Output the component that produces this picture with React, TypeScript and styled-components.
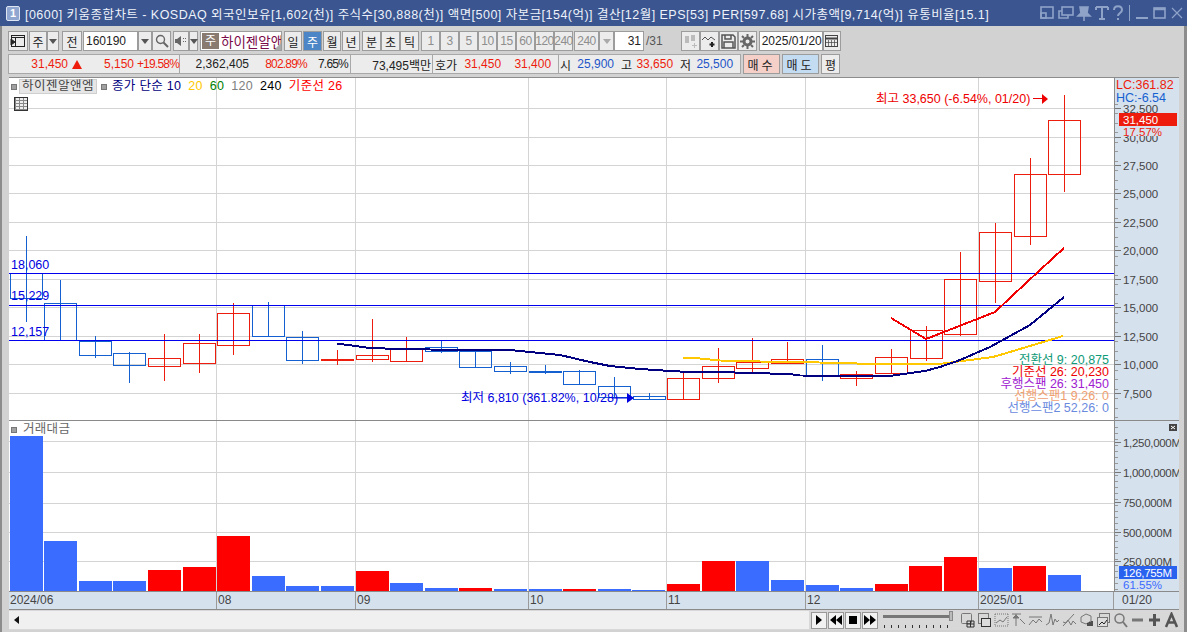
import React from 'react'
import styled, { createGlobalStyle } from 'styled-components'

const FONT = `"Liberation Sans", "Noto Sans CJK KR", sans-serif`
const RED = '#ee1c0c'
const CANDLE_BLUE = '#1560d0'
const AXIS_BG = '#d6e1ee'

const GlobalStyle = createGlobalStyle`
  html, body { margin: 0; padding: 0; background: #d2d2d2; overflow: hidden; }
  * { box-sizing: border-box; }
`

const Win = styled.div`
  width: 1187px;
  height: 632px;
  display: flex;
  flex-direction: column;
  background: #d2d2d2;
  font-family: ${FONT};
  font-size: 12px;
  color: #222;
  border-left: 2px solid #8c8c8c;
  border-right: 3px solid #8c8c8c;
`

const TitleBar = styled.div`
  height: 26px;
  margin: 0 -3px 0 -2px;
  flex: none;
  display: flex;
  align-items: center;
  background: #3a5590;
  color: #eef2fa;
  padding: 0 3px 0 6px;
  font-size: 12.5px;
  white-space: nowrap;
`

const TitleBadge = styled.span`
  width: 14px;
  height: 15px;
  margin-right: 5px;
  flex: none;
  border: 1px solid #dfe6f3;
  border-radius: 2px;
  background: #8fa6d0;
  color: #fff;
  font-weight: bold;
  font-size: 11px;
  line-height: 13px;
  text-align: center;
`

const TitleText = styled.span`
  letter-spacing: 0.47px;
  flex: 1;
`

const TitleIcons = styled.div`
  display: flex;
  align-items: center;
`

const Toolbar = styled.div`
  height: 20px;
  margin: 5px 0 0 6px;
  flex: none;
  display: flex;
  align-items: stretch;
`

const QuoteRow = styled(Toolbar)`
  margin-top: 3px;
`

const Btn = styled.div<{ $w: number; $ml?: number; $on?: boolean; $off?: boolean }>`
  width: ${p => p.$w}px;
  margin-left: ${p => p.$ml ?? 0}px;
  flex: none;
  display: flex;
  align-items: center;
  justify-content: center;
  border: 1px solid #9c9c9c;
  background: ${p => (p.$on ? '#4d86c6' : '#ececec')};
  color: ${p => (p.$on ? '#fff' : p.$off ? '#8e8e8e' : '#222')};
  font-size: 12px;
  white-space: nowrap;
  letter-spacing: ${p => (p.$off ? '-0.5px' : '0')};
`

const Field = styled(Btn)`
  background: #fff;
  justify-content: flex-start;
  padding-left: 2px;
`

const RightField = styled(Field)`
  justify-content: flex-end;
  padding: 0 2px 0 0;
`

const StockTag = styled(Btn)`
  background: #fff;
  justify-content: flex-start;
  gap: 2px;
  padding-left: 1px;
  color: #7a0a4a;
  font-size: 13.5px;
  overflow: hidden;
  position: relative;
  &::after {
    content: '';
    position: absolute;
    right: 0;
    bottom: 0;
    border-left: 7px solid transparent;
    border-bottom: 7px solid #aaa;
  }
`

const TagBox = styled.span`
  width: 17px;
  height: 16px;
  background: #8a7b70;
  color: #fff;
  text-align: center;
  line-height: 16px;
  font-size: 12px;
  flex: none;
`

const Arrow = styled.span<{ $off?: boolean }>`
  width: 0;
  height: 0;
  border-left: 4px solid transparent;
  border-right: 4px solid transparent;
  border-top: 5px solid ${p => (p.$off ? '#aaa' : '#555')};
`

const PlainText = styled.span<{ $ml?: number }>`
  margin-left: ${p => p.$ml ?? 0}px;
  align-self: center;
  color: #555;
  font-size: 12px;
`

const QuoteCell = styled.div<{ $w: number }>`
  width: ${p => p.$w}px;
  flex: none;
  display: flex;
  align-items: center;
  border: 1px solid #a8a8a8;
  border-left-width: 0;
  background: #ececec;
  white-space: nowrap;
  font-size: 12px;
  &:first-child { border-left-width: 1px; }
`

const Q = styled.span<{ $w?: number; $c?: string; $ml?: number; $tight?: boolean }>`
  ${p => (p.$w ? `width: ${p.$w}px; flex: none; text-align: right;` : '')}
  margin-left: ${p => p.$ml ?? 0}px;
  color: ${p => p.$c ?? '#222'};
  letter-spacing: ${p => (p.$tight ? '-0.8px' : '0')};
`

const UpMark = styled.span`
  margin-left: 4px;
  width: 0;
  height: 0;
  flex: none;
  border-left: 5px solid transparent;
  border-right: 5px solid transparent;
  border-bottom: 9px solid ${RED};
`

const TradeBtn = styled(Btn)<{ $bg: string }>`
  background: ${p => p.$bg};
  letter-spacing: 3px;
`

const Panes = styled.div`
  margin: 3px 0 0 7px;
  width: 1170px;
  flex: none;
  border-top: 1px solid #8c8c8c;
  display: flex;
  flex-direction: column;
`

const PaneRow = styled.div<{ $h: number }>`
  height: ${p => p.$h}px;
  flex: none;
  display: flex;
  border-bottom: 1px solid #8a8a8a;
`

const Plot = styled.div`
  width: 1105px;
  flex: none;
  background: #fff;
  position: relative;
  svg { display: block; }
`

const AxisCol = styled.div`
  flex: 1;
  background: ${AXIS_BG};
  border-left: 1px solid #8a8a8a;
  overflow: hidden;
  svg { display: block; }
`

const Legend = styled.div<{ $top: number }>`
  position: absolute;
  left: 2px;
  top: ${p => p.$top}px;
  display: flex;
  align-items: center;
  gap: 7px;
  font-size: 12.5px;
  line-height: 13px;
  white-space: nowrap;
`

const Marker = styled.i`
  width: 6px;
  height: 6px;
  background: #a0a0a0;
  border: 1px solid #777;
  flex: none;
`

const LegendTag = styled.span`
  background: #e6e6e6;
  border: 1px solid #cfcfcf;
  padding: 0 2px;
  color: #444;
  margin: 0 -3px 0 -5px;
  letter-spacing: 0.5px;
`

const L = styled.span<{ $c: string; $ml?: number }>`
  color: ${p => p.$c};
  margin-left: ${p => p.$ml ?? 0}px;
  letter-spacing: 0.3px;
`

const GridBtn = styled.div`
  position: absolute;
  left: 5px;
  top: 19px;
  width: 14px;
  height: 14px;
  border: 1px solid #333;
  background-color: #eee;
  background-image:
    repeating-linear-gradient(0deg, #888 0 1px, transparent 1px 3px),
    repeating-linear-gradient(90deg, #888 0 1px, transparent 1px 4px);
`

const TimeRow = styled.div`
  height: 18px;
  flex: none;
  display: flex;
  background: ${AXIS_BG};
  border-bottom: 1px solid #8a8a8a;
  font-size: 12px;
  color: #444;
`

const TimeCell = styled.div<{ $w: number; $pad?: number }>`
  width: ${p => p.$w}px;
  flex: none;
  padding-left: ${p => p.$pad ?? 1}px;
  line-height: 16px;
  border-left: 1px solid #9a9a9a;
  &:first-child { border-left: 0; }
`

const ScrollRow = styled.div`
  height: 20px;
  margin-left: 7px;
  flex: none;
  display: flex;
  align-items: center;
  background: #d8d8d8;
`

const ScrollArrow = styled.div`
  width: 14px;
  height: 18px;
  flex: none;
  background: #f0f0f0;
  display: flex;
  align-items: center;
  justify-content: center;
  &::before {
    content: '';
    border-top: 4px solid transparent;
    border-bottom: 4px solid transparent;
    border-right: 5px solid #111;
  }
`

const ScrollTrack = styled.div`
  width: 786px;
  height: 18px;
  background: #f0f0f0;
  flex: none;
`

const PlayBtn = styled.div<{ $ml?: number }>`
  width: 16px;
  height: 17px;
  margin-left: ${p => p.$ml ?? 0}px;
  flex: none;
  background: #f2f2f2;
  border: 1px solid #999;
  display: flex;
  align-items: center;
  justify-content: center;
`

const Slider = styled.div`
  width: 70px;
  height: 18px;
  margin: 0 7px 0 5px;
  flex: none;
  position: relative;
  &::before {
    content: '';
    position: absolute;
    left: 0;
    right: 2px;
    top: 4px;
    height: 3px;
    background: #777;
  }
  &::after {
    content: '';
    position: absolute;
    left: 1px;
    right: 3px;
    bottom: 1px;
    height: 3px;
    background: repeating-linear-gradient(90deg, #333 0 1px, transparent 1px 7px);
  }
`

const Thumb = styled.span`
  position: absolute;
  right: 0;
  top: 0;
  width: 4px;
  height: 10px;
  background: #bbb;
  border: 1px solid #888;
  z-index: 1;
`

const ToolIcons = styled.div`
  display: flex;
  align-items: center;
  gap: 2px;
`

// candles in screen coordinates: x, wick top, wick bottom, body top, body bottom, up
const candles: [number, number, number, number, number, boolean][] = [
  [26.5, 236, 322, 273, 298, false],
  [60.5, 280, 341, 303, 340, false],
  [95.5, 336, 358, 341, 355, false],
  [129.5, 352, 383, 353, 365, false],
  [164.5, 334, 381, 358, 366, true],
  [199.5, 334, 373, 343, 363, true],
  [233.5, 303, 355, 313, 345, true],
  [268.5, 302, 336, 305, 336, false],
  [302.5, 331, 364, 337, 360, false],
  [337.5, 350, 365, 359, 360, true],
  [372.5, 319, 362, 355, 359, true],
  [406.5, 337, 362, 348, 361, true],
  [441.5, 340, 353, 347, 351, false],
  [475.5, 351, 368, 351, 367, false],
  [510.5, 362, 374, 366, 371, false],
  [545.5, 365, 374, 371, 372, false],
  [579.5, 370, 385, 371, 384, false],
  [614.5, 377, 397, 386, 397, false],
  [649.5, 393, 400, 396, 399, false],
  [683.5, 371, 400, 378, 399, true],
  [718.5, 348, 383, 366, 378, true],
  [752.5, 338, 372, 362, 368, true],
  [787.5, 342, 364, 359, 363, true],
  [822.5, 345, 381, 359, 375, false],
  [856.5, 371, 386, 374, 378, true],
  [891.5, 349, 374, 357, 373, true],
  [926.5, 326, 361, 330, 358, true],
  [960.5, 252, 336, 279, 334, true],
  [995.5, 223, 303, 232, 281, true],
  [1030.5, 158, 245, 174, 236, true],
  [1064.5, 95, 192, 120, 174, true],
]

const volumes: [number, number, boolean][] = [
  [10, 436, false], [44, 541, false], [79, 581, false], [113, 581, false], [148, 570, true],
  [183, 567, true], [217, 536, true], [252, 576, false], [286, 586, false], [321, 586, false],
  [356, 571, true], [390, 583, false], [425, 588, false], [459, 588, true], [494, 589, false],
  [529, 589, false], [563, 589, true], [598, 589, false], [632, 590, false], [667, 584, true],
  [702, 561, true], [736, 561, false], [771, 580, false], [806, 585, false], [840, 588, false],
  [875, 584, true], [909, 566, true], [944, 557, true], [979, 568, false], [1013, 566, true],
  [1048, 575, false],
]

const priceGrid = [108.5, 137.5, 165.5, 193.5, 222.5, 250.5, 279.5, 307.5, 336.5, 364.5, 393.5]
const volGrid = [441.5, 472.5, 503.5, 532.5, 561.5]
const vGrid = [216.5, 355.5, 528.5, 666.5, 805.5, 978.5]

const navy = '337,343.5 370,348 400,349 430,349.5 477,350 510,350 530,352 560,355 590,362 610,366 640,369 670,371 690,372 720,372 750,373 790,374 800,375.5 890,376 910,373 925,371 940,367 960,360 990,347 1030,325 1064,297'
const redLine = '891,318 926,339 995,312 1012,296 1040,270 1064,248'
const yellow = '683,357.5 700,358.5 720,360.5 760,361.5 800,362 857,363.5 890,364.5 943,363.5 993,357 1030,346 1063,336'

const maLabels: [string, string, number][] = [
  ['전환선 9: 20,875', '#0f9a78', 364],
  ['기준선 26: 20,230', '#ee0000', 376],
  ['후행스팬 26: 31,450', '#a020d0', 388],
  ['선행스팬1 9,26: 0', '#f0a070', 400],
  ['선행스팬2 52,26: 0', '#6a8ae0', 412],
]

const priceTicks: [string, number][] = [
  ['32,500', 108], ['30,000', 137], ['27,500', 165], ['25,000', 193], ['22,500', 222], ['20,000', 250],
  ['17,500', 279], ['15,000', 307], ['12,500', 336], ['10,000', 364], ['7,500', 393],
]

const volTicks: [string, number][] = [
  ['1,250,000M', 442], ['1,000,000M', 472], ['750,000M', 502], ['500,000M', 532], ['250,000M', 561],
]

const TI = ({ children, w = 18 }: { children: React.ReactNode; w?: number }) => (
  <svg width={w} height="18" viewBox={`0 0 ${w} 18`} fill="none" stroke="#8fa3c8" strokeWidth="1.6">
    {children}
  </svg>
)

const ToolIcon = ({ children }: { children: React.ReactNode }) => (
  <svg width="15" height="16" viewBox="0 0 15 16" fill="none" stroke="#777" strokeWidth="1">
    {children}
  </svg>
)

const PriceChart = () => (
  <svg width="1105" height="342" viewBox="9 78 1105 342" fontFamily={FONT} fontSize="12.5">
    {priceGrid.map(y => <line key={y} x1="9" x2="1114" y1={y} y2={y} stroke="#d4d4d4" />)}
    {vGrid.map(x => <line key={x} x1={x} x2={x} y1="78" y2="420" stroke="#d4d4d4" />)}
    {candles.map(([x, wt, wb, bt, bb, up]) => {
      const c = up ? RED : CANDLE_BLUE
      return (
        <g key={x} stroke={c} fill="none">
          <line x1={x} x2={x} y1={wt} y2={wb} />
          <rect x={x - 16} y={bt + 0.5} width="32" height={bb - bt} />
        </g>
      )
    })}
    {[273.5, 305.5, 340.5].map(y => (
      <line key={y} x1="9" x2="1114" y1={y} y2={y} stroke="#0000ee" />
    ))}
    <polyline points={yellow} fill="none" stroke="#ffc800" strokeWidth="2" shapeRendering="crispEdges" />
    <polyline points={navy} fill="none" stroke="#000080" strokeWidth="2" shapeRendering="crispEdges" />
    <polyline points={redLine} fill="none" stroke="#f00000" strokeWidth="2" shapeRendering="crispEdges" />
    <g fill="#0000e0">
      <text x="11" y="269">18,060</text>
      <text x="11" y="300">15,229</text>
      <text x="11" y="336">12,157</text>
      <text x="461" y="402">최저 6,810 (361.82%, 10/28)</text>
      <path d="M612 398h16" stroke="#0000e0" />
      <path d="M627 393l7 5-7 5z" />
    </g>
    <g fill="#ee0000">
      <text x="876" y="103">최고 33,650 (-6.54%, 01/20)</text>
      <path d="M1033 98.5h11" stroke="#ee0000" />
      <path d="M1042 94l6 5-6 5z" />
    </g>
    {maLabels.map(([t, c, y]) => (
      <text key={t} x="1109" y={y} fill={c} textAnchor="end">{t}</text>
    ))}
  </svg>
)

const PriceAxis = () => (
  <svg width="64" height="342" viewBox="1114 78 64 342" fontFamily={FONT} fontSize="11.5" fill="#444">
    {Array.from({ length: 34 }, (_, i) => 103.5 + i * 9.5).map(y => (
      <line key={y} x1="1114" x2="1117" y1={Math.round(y) + 0.5} y2={Math.round(y) + 0.5} stroke="#999" />
    ))}
    {priceTicks.map(([t, y]) => (
      <g key={t}>
        <line x1="1114" x2="1120" y1={y + 0.5} y2={y + 0.5} stroke="#777" />
        <text x="1122" y={y + 5}>{t}</text>
      </g>
    ))}
    <rect x="1115" y="78" width="62" height="26" fill={AXIS_BG} />
    <rect x="1120" y="126" width="56" height="10" fill={AXIS_BG} />
    <text x="1115" y="89" fill="#ee1c0c" fontSize="12.5">LC:361.82</text>
    <text x="1115" y="102" fill="#1560d0" fontSize="12.5">HC:-6.54</text>
    <rect x="1118" y="113" width="58" height="13" fill="#ee1c0c" />
    <text x="1122" y="124" fill="#fff">31,450</text>
    <text x="1122" y="136" fill="#ee1c0c">17.57%</text>
  </svg>
)

const VolumeChart = () => (
  <svg width="1105" height="170" viewBox="9 421 1105 170">
    {volGrid.map(y => <line key={y} x1="9" x2="1114" y1={y} y2={y} stroke="#d4d4d4" />)}
    {vGrid.map(x => <line key={x} x1={x} x2={x} y1="421" y2="591" stroke="#d4d4d4" />)}
    {volumes.map(([x, top, up]) => (
      <rect key={x} x={x} y={top} width="33" height={591 - top} fill={up ? '#ff0000' : '#3a6cff'} />
    ))}
  </svg>
)

const VolumeAxis = () => (
  <svg width="64" height="170" viewBox="1114 421 64 170" fontFamily={FONT} fontSize="11.5" fill="#444">
    <rect x="1168" y="424" width="8" height="7" fill="#444" />
    <path d="M1170 426l4 3M1174 426l-4 3" stroke="#fff" />
    {Array.from({ length: 28 }, (_, i) => 427 + i * 6).map(y => (
      <line key={y} x1="1114" x2="1117" y1={y + 0.5} y2={y + 0.5} stroke="#999" />
    ))}
    {volTicks.map(([t, y]) => (
      <g key={t}>
        <line x1="1114" x2="1120" y1={y + 0.5} y2={y + 0.5} stroke="#777" />
        <text x="1122" y={y + 5} letterSpacing="-0.3">{t}</text>
      </g>
    ))}
    <rect x="1118" y="566" width="58" height="13" fill="#2a62f0" />
    <text x="1122" y="577" fill="#fff" letterSpacing="-0.3">126,755M</text>
    <text x="1122" y="589" fill="#3a6cff">61.55%</text>
  </svg>
)

export default function App() {
  return (
    <Win>
      <GlobalStyle />
      <TitleBar>
        <TitleBadge>1</TitleBadge>
        <TitleText>
          [0600] 키움종합차트 - KOSDAQ 외국인보유[1,602(천)] 주식수[30,888(천)] 액면[500] 자본금[154(억)] 결산[12월] EPS[53] PER[597.68] 시가총액[9,714(억)] 유통비율[15.1]
        </TitleText>
        <TitleIcons>
          <TI><rect x="2" y="3" width="12" height="11" /><rect x="2" y="9" width="5" height="5" /></TI>
          <TI><rect x="5" y="3" width="11" height="8" /><path d="M5 7H2v7h9v-3" /></TI>
          <TI><path d="M5 3h8l-1 6 3 3H3l3-3zM9 12v5" fill="#8fa3c8" /></TI>
          <TI><path d="M3 3h12M9 3v12M6 15h6M3 3v3M15 3v3" strokeWidth="2" /></TI>
          <TI w={14}><path d="M3 6c0-5 8-5 8 0 0 3-4 3-4 6M7 14v2" strokeWidth="2" /></TI>
          <TI w={9}><path d="M4.5 1v16" strokeWidth="1" /></TI>
          <TI><path d="M2 14h12" strokeWidth="2" /></TI>
          <TI><rect x="2" y="4" width="11" height="10" /><path d="M2 5h11" strokeWidth="2.5" /></TI>
          <TI w={14}><path d="M2 4l10 10M12 4L2 14" strokeWidth="1.2" /></TI>
        </TitleIcons>
      </TitleBar>

      <Toolbar>
        <Btn $w={20}>
          <svg width="16" height="14" viewBox="0 0 16 14" fill="none" stroke="#222">
            <rect x="1.5" y="1.5" width="13" height="11" />
            <path d="M1.5 3.5h13M5.5 3.5v9" />
            <path d="M1 5l4 3-4 3z" fill="#222" />
          </svg>
        </Btn>
        <Btn $w={18} $ml={1}>주</Btn>
        <Btn $w={12}><Arrow /></Btn>
        <Btn $w={20} $ml={3}>전</Btn>
        <Field $w={55} $ml={1}>160190</Field>
        <Btn $w={14}><Arrow /></Btn>
        <Btn $w={19}>
          <svg width="14" height="14" viewBox="0 0 14 14" fill="none" stroke="#666" strokeWidth="1.4">
            <circle cx="5.5" cy="5.5" r="4" /><path d="M8.5 8.5L13 13" strokeWidth="2" />
          </svg>
        </Btn>
        <Btn $w={16} $ml={2}>
          <svg width="14" height="12" viewBox="0 0 14 12" fill="#666">
            <path d="M1 4h2l4-3v10L3 8H1z" /><path d="M9 3h1v1H9zM11 3h1v1h-1zM9 6h1v1H9zM11 6h1v1h-1z" />
          </svg>
        </Btn>
        <Btn $w={9}><Arrow /></Btn>
        <StockTag $w={82} $ml={2}><TagBox>주</TagBox>하이젠알앤</StockTag>
        <Btn $w={18} $ml={2}>일</Btn>
        <Btn $w={19} $ml={1} $on>주</Btn>
        <Btn $w={18} $ml={1}>월</Btn>
        <Btn $w={18} $ml={1}>년</Btn>
        <Btn $w={19} $ml={2}>분</Btn>
        <Btn $w={19}>초</Btn>
        <Btn $w={19}>틱</Btn>
        {['1', '3', '5', '10', '15', '60', '120', '240'].map((t, i) => (
          <Btn key={t} $w={19} $ml={i === 0 ? 2 : 0} $off>{t}</Btn>
        ))}
        <Btn $w={25} $ml={1} $off>240</Btn>
        <Btn $w={15}><Arrow $off /></Btn>
        <RightField $w={30}>31</RightField>
        <PlainText $ml={2}>/31</PlainText>
        <Btn $w={19} $ml={18}>
          <svg width="15" height="14" viewBox="0 0 15 14" fill="#bbb">
            <path d="M2 2h4v7H2zM8 1h4v6H8zM11 9h1v2h2v1h-2v2h-1v-2H9v-1h2z" />
          </svg>
        </Btn>
        <Btn $w={19}>
          <svg width="16" height="14" viewBox="0 0 16 14" fill="none" stroke="#555">
            <path d="M1 6l3-3 3 3 3-3 4 3" /><path d="M11 8v5M8.5 10.5h5" strokeWidth="2" stroke="#222" />
          </svg>
        </Btn>
        <Btn $w={19}>
          <svg width="15" height="15" viewBox="0 0 15 15" fill="none" stroke="#555" strokeWidth="1.5">
            <path d="M1 1h11l2 2v11H1z" /><path d="M4 1v4h6V1M3 14V8h9v6" />
          </svg>
        </Btn>
        <Btn $w={19}>
          <svg width="15" height="15" viewBox="0 0 15 15" fill="none" stroke="#666">
            <circle cx="7.5" cy="7.5" r="3.5" strokeWidth="3" />
            <path d="M7.5 0v3M7.5 12v3M0 7.5h3M12 7.5h3M2 2l2 2M11 11l2 2M2 13l2-2M11 4l2-2" strokeWidth="2" />
          </svg>
        </Btn>
        <Field $w={64} $ml={2}>2025/01/20</Field>
        <Btn $w={18}>
          <svg width="13" height="12" viewBox="0 0 13 12" fill="none" stroke="#444">
            <rect x="0.5" y="0.5" width="12" height="11" /><path d="M0 3.5h13" strokeWidth="2" />
            <path d="M3.5 5v6M6.5 5v6M9.5 5v6M1 7.5h11" strokeWidth="0.7" />
          </svg>
        </Btn>
      </Toolbar>

      <QuoteRow>
        <QuoteCell $w={172}>
          <Q $w={59} $c={RED}>31,450</Q>
          <UpMark />
          <Q $w={52} $c={RED}>5,150</Q>
          <Q $w={45} $c={RED} $tight>+19.58%</Q>
        </QuoteCell>
        <QuoteCell $w={171}>
          <Q $w={69}>2,362,405</Q>
          <Q $w={58} $c={RED} $tight>802.89%</Q>
          <Q $w={41} $tight>7.65%</Q>
        </QuoteCell>
        <QuoteCell $w={82}><Q $w={80}>73,495백만</Q></QuoteCell>
        <QuoteCell $w={126}>
          <Q $ml={2}>호가</Q>
          <Q $w={44} $c={RED}>31,450</Q>
          <Q $w={50} $c={RED}>31,400</Q>
        </QuoteCell>
        <QuoteCell $w={182}>
          <Q $ml={1}>시</Q>
          <Q $w={43} $c="#1d55c8">25,900</Q>
          <Q $ml={7}>고</Q>
          <Q $w={41} $c={RED}>33,650</Q>
          <Q $ml={7}>저</Q>
          <Q $w={42} $c="#1d55c8">25,500</Q>
        </QuoteCell>
        <TradeBtn $w={37} $ml={2} $bg="#f5d0c8">매수</TradeBtn>
        <TradeBtn $w={37} $ml={2} $bg="#c4dcf2">매도</TradeBtn>
        <Btn $w={19} $ml={2}>평</Btn>
      </QuoteRow>

      <Panes>
        <PaneRow $h={343}>
          <Plot>
            <PriceChart />
            <Legend $top={1}>
              <Marker />
              <LegendTag>하이젠알앤엠</LegendTag>
              <Marker />
              <L $c="#000080" $ml={-2}>종가 단순 10</L>
              <L $c="#ffc800">20</L>
              <L $c="#008000">60</L>
              <L $c="#808080">120</L>
              <L $c="#000">240</L>
              <L $c="#f00">기준선 26</L>
            </Legend>
            <GridBtn />
          </Plot>
          <AxisCol><PriceAxis /></AxisCol>
        </PaneRow>
        <PaneRow $h={171}>
          <Plot>
            <VolumeChart />
            <Legend $top={2}>
              <Marker />
              <L $c="#666" $ml={-1}>거래대금</L>
            </Legend>
          </Plot>
          <AxisCol><VolumeAxis /></AxisCol>
        </PaneRow>
        <TimeRow>
          <TimeCell $w={207}>2024/06</TimeCell>
          <TimeCell $w={139}>08</TimeCell>
          <TimeCell $w={173}>09</TimeCell>
          <TimeCell $w={138}>10</TimeCell>
          <TimeCell $w={139}>11</TimeCell>
          <TimeCell $w={173}>12</TimeCell>
          <TimeCell $w={135}>2025/01</TimeCell>
          <TimeCell $w={66} $pad={8}>01/20</TimeCell>
        </TimeRow>
      </Panes>

      <ScrollRow>
        <ScrollArrow />
        <ScrollTrack />
        <PlayBtn $ml={2}><svg width="8" height="10" viewBox="0 0 8 10"><path d="M1 0l6 5-6 5z" /></svg></PlayBtn>
        <PlayBtn $ml={1}><svg width="12" height="10" viewBox="0 0 12 10"><path d="M6 0L0 5l6 5zM12 0L6 5l6 5z" /></svg></PlayBtn>
        <PlayBtn $ml={1}><svg width="8" height="8" viewBox="0 0 8 8"><path d="M0 0h8v8H0z" /></svg></PlayBtn>
        <PlayBtn $ml={1}><svg width="12" height="10" viewBox="0 0 12 10"><path d="M0 0l6 5-6 5zM6 0l6 5-6 5z" /></svg></PlayBtn>
        <Slider><Thumb /></Slider>
        <ToolIcons>
          <ToolIcon><rect x="1.5" y="1.5" width="10" height="10" rx="1" /><path d="M7 9h7v6H7zM10.5 9v6M7 12h7" stroke="#333" /></ToolIcon>
          <ToolIcon><rect x="1.5" y="1.5" width="10" height="10" /><rect x="4.5" y="6.5" width="9" height="8" fill="#ddd" stroke="#333" /></ToolIcon>
          <ToolIcon><path d="M1 2h13M1 14h13M1 2v12M14 2v12" strokeDasharray="1 1" /><path d="M2 11l4-3 3 2 4-5" /></ToolIcon>
          <ToolIcon><path d="M1 2h9M5 2v12" /><path d="M9 7l5 5" /><path d="M5 3l-3 3h6z" fill="#777" /></ToolIcon>
          <ToolIcon><path d="M1 5h13M1 13l4-5 3 3 3-4 3 3" /></ToolIcon>
          <ToolIcon><path d="M1 13l3-2 2-9 2 11 2-6 2 3 2-2" /></ToolIcon>
          <ToolIcon><path d="M1 14L12 2M1 10l3 1 2-3 3 5 2-4 3 3" /></ToolIcon>
          <ToolIcon><path d="M2 5l5-3 5 2v5l-5 3-5-2z" /><path d="M9 14v-3M11 14v-4M13 14v-5" stroke="#222" strokeWidth="1.5" /></ToolIcon>
          <ToolIcon><rect x="3.5" y="1.5" width="10" height="9" /><rect x="1.5" y="5.5" width="10" height="9" fill="#ddd" /><path d="M3 13l3-3 2 2 3-4" stroke="#222" /></ToolIcon>
          <ToolIcon><circle cx="6.5" cy="6.5" r="4.5" strokeWidth="1.5" /><path d="M10 10l4 5" strokeWidth="2" /></ToolIcon>
          <ToolIcon><path d="M2 8h11" strokeWidth="3" /></ToolIcon>
          <ToolIcon><path d="M2 8h11M7.5 2v12" strokeWidth="3" stroke="#555" /></ToolIcon>
          <ToolIcon><path d="M2 15L7.5 2 13 15M4.500 10.500h6" strokeWidth="2.5" stroke="#555" /></ToolIcon>
        </ToolIcons>
      </ScrollRow>
    </Win>
  )
}
